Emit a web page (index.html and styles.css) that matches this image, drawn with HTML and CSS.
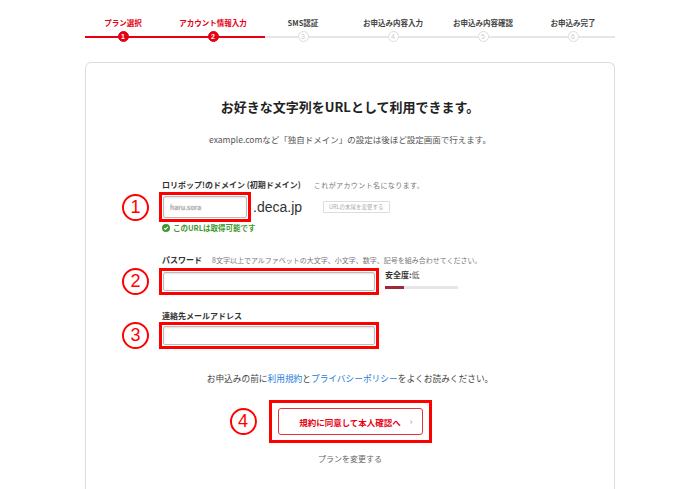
FILE: index.html
```html
<!DOCTYPE html>
<html lang="ja">
<head>
    <meta charset="UTF-8">
    <meta name="viewport" content="width=device-width, initial-scale=1.0">
    <title>アカウント情報入力</title>
    <link rel="stylesheet" href="styles.css">
</head>
<body>
    <div class="stepper">
        <div class="step done"><span class="step-label">プラン選択</span><span class="step-dot">1</span></div>
        <div class="step done"><span class="step-label">アカウント情報入力</span><span class="step-dot">2</span></div>
        <div class="step"><span class="step-label">SMS認証</span><span class="step-dot">3</span></div>
        <div class="step"><span class="step-label">お申込み内容入力</span><span class="step-dot">4</span></div>
        <div class="step"><span class="step-label">お申込み内容確認</span><span class="step-dot">5</span></div>
        <div class="step"><span class="step-label">お申込み完了</span><span class="step-dot">6</span></div>
    </div>

    <div class="card">
        <h1 class="title">お好きな文字列をURLとして利用できます。</h1>
        <p class="lead">example.comなど「独自ドメイン」の設定は後ほど設定画面で行えます。</p>

        <div class="form">
            <div class="field-label">ロリポップ!のドメイン (初期ドメイン)<span class="hint hint-wide">これがアカウント名になります。</span></div>
            <div class="field-row">
                <span class="anno">1</span>
                <span class="mark"><input class="input input-domain" type="text" value="haru.sora"></span>
                <span class="domain">.deca.jp</span>
                <button class="small-btn" type="button">URLの末尾を変更する</button>
            </div>
            <div class="ok-msg">
                <svg width="8" height="8" viewBox="0 0 8 8"><circle cx="4" cy="4" r="4" fill="#3e9a2e"/><path d="M2.1 4.1 3.4 5.4 5.9 2.8" fill="none" stroke="#fff" stroke-width="1.1"/></svg>
                このURLは取得可能です
            </div>

            <div class="field-label section">パスワード<span class="hint">8文字以上でアルファベットの大文字、小文字、数字、記号を組み合わせてください。</span></div>
            <div class="field-row row-pass">
                <span class="anno">2</span>
                <span class="mark"><input class="input input-wide" type="password"></span>
                <div class="strength">
                    <div class="strength-text">安全度:<span>低</span></div>
                    <div class="strength-bar"><div class="strength-fill" style="width: 19px"></div></div>
                </div>
            </div>

            <div class="field-label section-3">連絡先メールアドレス</div>
            <div class="field-row row-mail">
                <span class="anno">3</span>
                <span class="mark"><input class="input input-wide" type="email"></span>
            </div>
        </div>

        <p class="agree">お申込みの前に<a href="#">利用規約</a>と<a href="#">プライバシーポリシー</a>をよくお読みください。</p>

        <div class="cta-row">
            <span class="anno anno-cta">4</span>
            <span class="mark mark-cta">
                <button class="cta" type="button"><span></span><span class="cta-text">規約に同意して本人確認へ</span><span class="cta-arrow">›</span></button>
            </span>
            <span></span>
        </div>

        <p class="change-plan">プランを変更する</p>
    </div>
</body>
</html>
```

FILE: styles.css
```css
* {
    margin: 0;
    padding: 0;
    box-sizing: border-box;
}

html, body {
    overflow: hidden;
}

body {
    background-color: #fff;
    font-family: "Noto Sans CJK JP", "Noto Sans", sans-serif;
    color: #333;
    width: 700px;
    height: 489px;
}

/* stepper */
.stepper {
    position: relative;
    display: flex;
    width: 540px;
    margin-left: 78px;
    padding-top: 17px;
}

.stepper::before,
.stepper::after {
    content: "";
    position: absolute;
    top: 36px;
    left: 7px;
    height: 2px;
}

.stepper::before {
    right: 3px;
    background-color: #e6e6e6;
}

.stepper::after {
    width: 180px;
    background-color: #e60012;
}

.step {
    flex: 0 0 90px;
    display: flex;
    flex-direction: column;
    align-items: center;
}

.step-label {
    font-size: 7.5px;
    font-weight: bold;
    line-height: 12px;
    color: #444;
    white-space: nowrap;
}

.step-dot {
    position: relative;
    z-index: 1;
    flex: 0 0 11px;
    width: 11px;
    height: 11px;
    margin-top: 2px;
    border-radius: 50%;
    border: 1px solid #ddd;
    background-color: #fff;
    color: #ccc;
    font-size: 7px;
    line-height: 9px;
    text-align: center;
    font-family: "Liberation Sans", sans-serif;
}

.step.done .step-label {
    color: #e60012;
}

.step.done .step-dot {
    border-color: #e60012;
    background-color: #e60012;
    color: #fff;
    font-weight: bold;
}

/* card */
.card {
    width: 530px;
    height: 427px;
    margin: 20px 0 0 85px;
    padding-top: 34px;
    border: 1px solid #ddd;
    border-bottom: none;
    border-radius: 6px 6px 0 0;
    text-align: center;
}

.title {
    font-size: 13px;
    line-height: 20px;
    font-weight: bold;
    color: #222;
}

.lead {
    margin-top: 15px;
    font-size: 8.5px;
    line-height: 14px;
    color: #555;
}

.form {
    margin: 33px 0 0 36px;
    text-align: left;
}

.field-label {
    padding-left: 40px;
    font-size: 8px;
    line-height: 12px;
    font-weight: bold;
    color: #333;
    white-space: nowrap;
}

.hint {
    margin-left: 10px;
    font-size: 7px;
    font-weight: normal;
    color: #777;
}

.hint-wide {
    margin-left: 13px;
    letter-spacing: 0.4px;
}

.section {
    margin-top: 21px;
}

.section-3 {
    margin-top: 15px;
}

.field-row {
    display: flex;
    align-items: center;
    margin-top: 1px;
}

.row-pass {
    margin-top: 2px;
    align-items: flex-start;
}

.row-mail {
    margin-top: 0;
}

.anno {
    flex: 0 0 27px;
    width: 27px;
    height: 27px;
    margin-right: 10px;
    border: 2px solid #f00;
    border-radius: 50%;
    color: #f00;
    font-family: "Liberation Sans", sans-serif;
    font-size: 18px;
    line-height: 23px;
    text-align: center;
}

.mark {
    display: inline-flex;
    border: 3px solid #f00;
    padding: 1px;
    background-color: #fff;
}

.input {
    display: block;
    height: 19px;
    border: 1px solid #bbb;
    border-radius: 2px;
    box-shadow: inset 0 1px 2px rgba(0, 0, 0, 0.12);
    background-color: #fff;
    padding: 0 6px;
    font-family: inherit;
    font-size: 7px;
    outline: none;
}

.input-domain {
    width: 84px;
    height: 22px;
    color: rgba(150, 150, 150, 0.6);
    text-shadow: 0 0 1.5px #888;
}

.input-wide {
    width: 212px;
}

.domain {
    margin-left: 2px;
    font-size: 14px;
    color: #333;
    font-family: "Liberation Sans", sans-serif;
}

.small-btn {
    margin-left: 21px;
    padding: 0 5px;
    height: 12px;
    border: 1px solid #ddd;
    border-radius: 1px;
    background-color: #fff;
    color: #aaa;
    font-family: inherit;
    font-size: 5.5px;
    line-height: 10px;
}

.ok-msg {
    display: flex;
    align-items: center;
    gap: 3px;
    margin-top: 1px;
    padding-left: 40px;
    font-size: 7.5px;
    line-height: 10px;
    font-weight: bold;
    color: #3e9a2e;
}

.strength {
    margin-left: 6px;
    padding-top: 2px;
}

.strength-text {
    font-size: 8px;
    line-height: 10px;
    font-weight: bold;
    color: #333;
}

.strength-text span {
    font-weight: normal;
    color: #555;
}

.strength-bar {
    width: 73px;
    height: 3px;
    margin-top: 6px;
    background-color: #e6e6e6;
}

.strength-fill {
    height: 100%;
    background-color: #a0283a;
}

.agree {
    margin-top: 23px;
    font-size: 8.7px;
    line-height: 14px;
    color: #444;
}

.agree a {
    color: #1d7bd8;
    text-decoration: none;
}

.cta-row {
    display: grid;
    grid-template-columns: 1fr auto 1fr;
    align-items: center;
    margin-top: 14px;
}

.anno-cta {
    justify-self: end;
    margin-right: 12px;
}

.mark-cta {
    padding: 5px 6px;
}

.cta {
    display: grid;
    grid-template-columns: 1fr auto 1fr;
    align-items: center;
    width: 145px;
    height: 27px;
    border: 1px solid #e8323f;
    border-radius: 3px;
    background-color: #fff;
    font-family: inherit;
    cursor: pointer;
}

.cta-text {
    font-size: 8.5px;
    font-weight: bold;
    color: #e60012;
}

.cta-arrow {
    justify-self: end;
    padding-right: 9px;
    font-size: 9px;
    color: #d9868c;
}

.change-plan {
    margin-top: 10px;
    font-size: 8px;
    line-height: 12px;
    color: #666;
}
```
